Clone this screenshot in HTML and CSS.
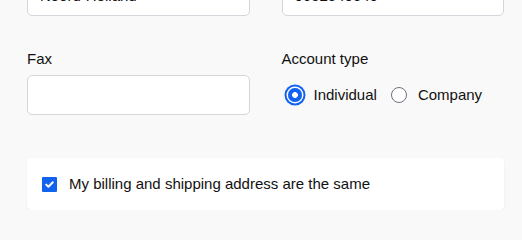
FILE: index.html
```html
<!DOCTYPE html>
<html lang="en">
<head>
<meta charset="utf-8">
<title>Billing details</title>
<link rel="stylesheet" href="styles.css">
</head>
<body>
<div class="page">
  <div class="grid">
    <div class="field top">
      <div class="input">Noord-Holland</div>
    </div>
    <div class="field top">
      <div class="input">0652540540</div>
    </div>
    <div class="field">
      <label class="label">Fax</label>
      <div class="input"></div>
    </div>
    <div class="field">
      <span class="label">Account type</span>
      <div class="radios">
        <span class="radio-opt"><span class="radio checked"></span><span class="radio-text">Individual</span></span>
        <span class="radio-opt"><span class="radio"></span><span class="radio-text">Company</span></span>
      </div>
    </div>
  </div>
  <div class="card">
    <span class="checkbox">
      <svg width="15" height="15" viewBox="0 0 15 15"><path d="M4.2 7.6 L6.4 9.7 L10.8 5.3" fill="none" stroke="#fff" stroke-width="2" stroke-linecap="round" stroke-linejoin="round"/></svg>
    </span>
    <span class="check-text">My billing and shipping address are the same</span>
  </div>
</div>
</body>
</html>
```
FILE: styles.css
```css
html, body {
  margin: 0;
  padding: 0;
  background: #f9f9f9;
}
body {
  font-family: "Liberation Sans", Arial, sans-serif;
  font-size: 15px;
  color: #111;
  overflow: hidden;
}
.page {
  padding: 0 18px 0 27px;
  margin-top: -24px;
}
.grid {
  display: grid;
  grid-template-columns: 1fr 1fr;
  column-gap: 32px;
  row-gap: 33px;
}
.field {
  display: flex;
  flex-direction: column;
}
.label {
  line-height: 20px;
  height: 20px;
  margin-bottom: 6px;
  color: #111;
}
.input {
  box-sizing: border-box;
  height: 40px;
  background: #fff;
  border: 1px solid #d4d6dc;
  border-radius: 5px;
  padding: 0 12px;
  line-height: 38px;
  font-size: 15px;
  color: #111;
}
.radios {
  height: 40px;
  display: flex;
  align-items: center;
  gap: 14px;
  padding-left: 4px;
}
.radio-opt {
  display: flex;
  align-items: center;
  gap: 11px;
}
.radio {
  box-sizing: border-box;
  width: 16px;
  height: 16px;
  border-radius: 50%;
  border: 1.5px solid #6b7280;
  background: #fff;
}
.radio.checked {
  width: 14px;
  height: 14px;
  margin: 0 1px 0 2px;
  border: none;
  background: radial-gradient(circle, #fff 0 2.6px, #1262f0 3.2px);
  box-shadow: 0 0 0 1.5px #fff, 0 0 0 3.5px #1262f0;
}
.radio-text {
  line-height: 20px;
}
.card {
  margin-top: 43px;
  width: 477px;
  box-sizing: border-box;
  height: 52px;
  background: #fff;
  border-radius: 4px;
  box-shadow: 0 1px 2px rgba(0,0,0,0.08);
  display: flex;
  align-items: center;
  padding-left: 15px;
  gap: 12px;
}
.checkbox {
  width: 15px;
  height: 15px;
  background: #1262f0;
  border-radius: 1px;
  display: flex;
}
.check-text {
  line-height: 20px;
}
```
